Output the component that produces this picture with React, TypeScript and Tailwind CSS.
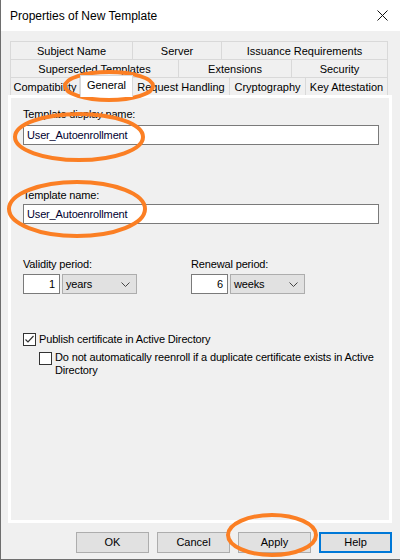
import React from "react";

const font = { fontFamily: '"Liberation Sans", Arial, sans-serif' };

type Tab = { label: string; w: number; active?: boolean };

const tabRows: Tab[][] = [
  [
    { label: "Subject Name", w: 123 },
    { label: "Server", w: 89 },
    { label: "Issuance Requirements", w: 166 },
  ],
  [
    { label: "Superseded Templates", w: 169 },
    { label: "Extensions", w: 113 },
    { label: "Security", w: 96 },
  ],
  [
    { label: "Compatibility", w: 70 },
    { label: "General", w: 53, active: true },
    { label: "Request Handling", w: 97 },
    { label: "Cryptography", w: 76 },
    { label: "Key Attestation", w: 82 },
  ],
];

function TabRow({ tabs }: { tabs: Tab[] }) {
  return (
    <div className="flex h-[18px]">
      {tabs.map((t, i) =>
        t.active ? (
          <div
            key={t.label}
            style={{ width: t.w }}
            className="relative z-10 -mt-[2px] h-[22px] bg-white flex items-start justify-center pt-[2px] text-[11px] leading-[14px] text-black border-l border-r border-t border-[#d9d9d9]"
          >
            {t.label}
          </div>
        ) : (
          <div
            key={t.label}
            style={{ width: t.w }}
            className={
              "h-[18px] flex items-center justify-center whitespace-nowrap text-[11px] leading-[14px] text-black border-t border-r border-[#d9d9d9] " +
              (i === 0 ? "border-l" : "")
            }
          >
            {t.label}
          </div>
        )
      )}
    </div>
  );
}

function TextBox({ value }: { value: string }) {
  return (
    <div className="h-[20px] w-[356px] bg-white border border-[#7a7a7a] flex items-center pl-[3px] text-[11px] text-[#000030]">
      {value}
    </div>
  );
}

function NumBox({ value }: { value: string }) {
  return (
    <div className="h-[20px] w-[37px] bg-white border border-[#7a7a7a] flex items-center justify-end pr-[4px] text-[11px] text-black">
      {value}
    </div>
  );
}

function Select({ value }: { value: string }) {
  return (
    <div className="h-[20px] w-[75px] bg-[#e1e1e1] border border-[#adadad] flex items-center justify-between pl-[3px] pr-[6px] text-[11px] text-black">
      <span>{value}</span>
      <svg width="9" height="5" viewBox="0 0 9 5">
        <path d="M0.5 0.5 L4.5 4.5 L8.5 0.5" fill="none" stroke="#444" strokeWidth="1" />
      </svg>
    </div>
  );
}

function Checkbox({ checked }: { checked?: boolean }) {
  return (
    <div className="w-[13px] h-[13px] shrink-0 bg-white border border-[#333] flex items-center justify-center">
      {checked && (
        <svg width="11" height="11" viewBox="0 0 11 11">
          <path d="M1.5 5.5 L4 8 L9.5 2" fill="none" stroke="#333" strokeWidth="1.2" />
        </svg>
      )}
    </div>
  );
}

function Button({ label, focused }: { label: string; focused?: boolean }) {
  return (
    <div
      className={
        "w-[73px] h-[21px] bg-[#e1e1e1] flex items-center justify-center text-[11px] text-black " +
        (focused ? "border-2 border-[#0078d7]" : "border border-[#adadad]")
      }
    >
      {label}
    </div>
  );
}

export default function App() {
  return (
    <div style={font} className="relative w-[400px] h-[560px] bg-[#f0f0f0] border-l border-b border-[#6e6e6e] flex flex-col overflow-hidden">
      {/* title bar */}
      <div className="h-[31px] bg-white flex items-center justify-between pl-[9px] pr-[12px] shrink-0">
        <span className="text-[12px] text-black">Properties of New Template</span>
        <svg width="11" height="11" viewBox="0 0 11 11">
          <path d="M0.5 0.5 L10.5 10.5 M10.5 0.5 L0.5 10.5" stroke="#111" strokeWidth="1" />
        </svg>
      </div>

      {/* tab strip */}
      <div className="pt-[10px] pl-[9px]">
        {tabRows.map((row, i) => (
          <TabRow key={i} tabs={row} />
        ))}
      </div>

      {/* tab page */}
      <div className="ml-[7px] w-[384px] h-[428px] border-[3px] border-white pl-[12px] pt-[9px] shrink-0 text-[11px] tracking-[-0.15px]">
        <div className="leading-[14px] text-black">Template display name:</div>
        <div className="mt-[4px]">
          <TextBox value="User_Autoenrollment" />
        </div>

        <div className="mt-[43px] leading-[14px] text-black">Template name:</div>
        <div className="mt-[2px]">
          <TextBox value="User_Autoenrollment" />
        </div>

        <div className="mt-[33px] flex">
          <div className="w-[168px]">
            <div className="leading-[14px] text-black">Validity period:</div>
            <div className="mt-[3px] flex gap-[2px]">
              <NumBox value="1" />
              <Select value="years" />
            </div>
          </div>
          <div>
            <div className="leading-[14px] text-black">Renewal period:</div>
            <div className="mt-[3px] flex gap-[2px]">
              <NumBox value="6" />
              <Select value="weeks" />
            </div>
          </div>
        </div>

        <div className="mt-[38px] flex items-center gap-[3px] leading-[14px] text-black">
          <Checkbox checked />
          <span>Publish certificate in Active Directory</span>
        </div>
        <div className="mt-[6px] ml-[16px] flex items-start gap-[3px] leading-[13px] text-black">
          <Checkbox />
          <span className="-mt-[1px] w-[330px] shrink-0">
            Do not automatically reenroll if a duplicate certificate exists in Active Directory
          </span>
        </div>
      </div>

      {/* dialog buttons */}
      <div className="mt-[9px] flex justify-end gap-[8px] pr-[8px]">
        <Button label="OK" />
        <Button label="Cancel" />
        <Button label="Apply" />
        <Button label="Help" focused />
      </div>

      {/* orange highlight marks */}
      <svg className="absolute left-0 top-0 pointer-events-none" width="400" height="560" viewBox="0 0 400 560">
        <g fill="none" stroke="#fb7f24" strokeWidth="4">
          <ellipse cx="108" cy="86" rx="44" ry="14" />
          <ellipse cx="78" cy="137" rx="64" ry="23" />
          <ellipse cx="76" cy="209" rx="68" ry="27" />
          <ellipse cx="271" cy="535" rx="44" ry="20" />
        </g>
      </svg>
    </div>
  );
}
